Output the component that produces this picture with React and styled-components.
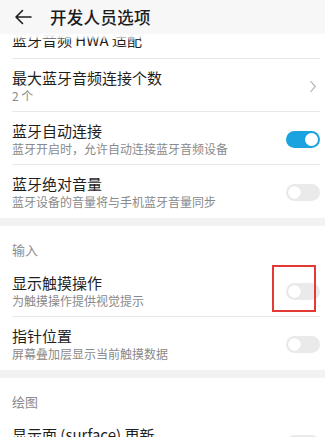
import React from "react";
import styled, { createGlobalStyle } from "styled-components";

const GlobalStyle = createGlobalStyle`
  html, body { margin: 0; padding: 0; background: #fff; }
  body { font-family: "Noto Sans CJK SC", "Noto Sans", sans-serif; -webkit-font-smoothing: antialiased; }
  * { box-sizing: border-box; }
`;

const Page = styled.div`
  width: 325px;
  height: 437px;
  overflow: hidden;
  display: flex;
  flex-direction: column;
  background: #fff;
`;

const Header = styled.div`
  position: relative;
  z-index: 2;
  height: 34px;
  flex: none;
  display: flex;
  align-items: center;
  padding-left: 14px;
  gap: 18px;
  background: #f7f7f7;
  &::after {
    content: "";
    position: absolute;
    left: 0;
    right: 0;
    top: 100%;
    height: 6px;
    background: linear-gradient(to bottom, rgba(255,255,255,1) 0%, rgba(255,255,255,0.85) 50%, rgba(255,255,255,0) 100%);
  }
`;

const Title = styled.div`
  font-size: 16.5px;
  font-weight: 500;
  color: #1c1c1c;
  letter-spacing: 0.3px;
`;

const Content = styled.div`
  flex: 1;
  overflow: hidden;
`;

const List = styled.div`
  margin-top: -13px;
  display: flex;
  flex-direction: column;
`;

const Row = styled.div`
  position: relative;
  padding-left: 12px;
  padding-right: 5px;
`;

const RowInner = styled.div`
  display: flex;
  align-items: center;
  min-height: ${(p) => (p.$single ? 38 : 53)}px;
  padding: ${(p) => (p.$single ? "9px 0 8px" : "9px 0 7px")};
  border-bottom: 1px solid ${(p) => (p.$last ? "transparent" : "#e8e8e8")};
`;

const Texts = styled.div`
  flex: 1;
  display: flex;
  flex-direction: column;
  align-self: flex-start;
`;

const ItemTitle = styled.div`
  font-size: 15px;
  line-height: 20px;
  color: #1f1f1f;
  white-space: nowrap;
`;

const ItemSub = styled.div`
  font-size: 12px;
  line-height: 16px;
  color: #8a8a8a;
  white-space: nowrap;
`;

const Toggle = styled.div`
  width: 34px;
  height: 17px;
  border-radius: 9px;
  flex: none;
  display: flex;
  align-items: center;
  justify-content: ${(p) => (p.$on ? "flex-end" : "flex-start")};
  padding: 0 2px;
  background: ${(p) => (p.$on ? "#1aa3de" : "#eaeaea")};
`;

const Knob = styled.div`
  width: 13px;
  height: 13px;
  border-radius: 50%;
  background: #fff;
  box-shadow: ${(p) => (p.$on ? "none" : "0 0 1px rgba(0,0,0,0.12)")};
`;

const Band = styled.div`
  height: 8px;
  background: #f2f2f2;
`;

const SectionHeader = styled.div`
  height: 38px;
  padding: 16px 12px 0;
  font-size: 13px;
  line-height: 16px;
  color: #8c8c8c;
`;

const Highlight = styled.div`
  position: absolute;
  left: 272px;
  top: 1px;
  width: 44px;
  height: 47px;
  border: 2px solid #e53935;
  pointer-events: none;
`;

const Chevron = () => (
  <svg width="8" height="13" viewBox="0 0 8 13" style={{ marginRight: 3 }}>
    <path d="M1.5 1.2 L6.3 6.5 L1.5 11.8" fill="none" stroke="#b5b5b5" strokeWidth="1.2" />
  </svg>
);

const BackArrow = () => (
  <svg width="18" height="16" viewBox="0 0 18 16">
    <path d="M17 8 H2 M8.5 1.5 L2 8 L8.5 14.5" fill="none" stroke="#1f1f1f" strokeWidth="1.6" strokeLinecap="round" strokeLinejoin="round" />
  </svg>
);

const Switch = ({ on }) => (
  <Toggle $on={on}>
    <Knob $on={on} />
  </Toggle>
);

const Item = ({ title, sub, right, last, single, children }) => (
  <Row>
    <RowInner $last={last} $single={single}>
      <Texts>
        <ItemTitle>{title}</ItemTitle>
        {sub && <ItemSub>{sub}</ItemSub>}
      </Texts>
      {right}
    </RowInner>
    {children}
  </Row>
);

export default function App() {
  return (
    <>
      <GlobalStyle />
      <Page>
        <Header>
          <BackArrow />
          <Title>开发人员选项</Title>
        </Header>
        <Content>
          <List>
            <Item single title="蓝牙音频 HWA 适配" />
            <Item title="最大蓝牙音频连接个数" sub="2 个" right={<Chevron />} />
            <Item title="蓝牙自动连接" sub="蓝牙开启时，允许自动连接蓝牙音频设备" right={<Switch on />} />
            <Item last title="蓝牙绝对音量" sub="蓝牙设备的音量将与手机蓝牙音量同步" right={<Switch />} />
            <Band />
            <SectionHeader>输入</SectionHeader>
            <Item title="显示触摸操作" sub="为触摸操作提供视觉提示" right={<Switch />}>
              <Highlight />
            </Item>
            <Item last title="指针位置" sub="屏幕叠加层显示当前触摸数据" right={<Switch />} />
            <Band />
            <SectionHeader>绘图</SectionHeader>
            <Item title="显示面 (surface) 更新" sub="窗口中的面更新时全部闪烁" right={<Switch />} />
          </List>
        </Content>
      </Page>
    </>
  );
}
